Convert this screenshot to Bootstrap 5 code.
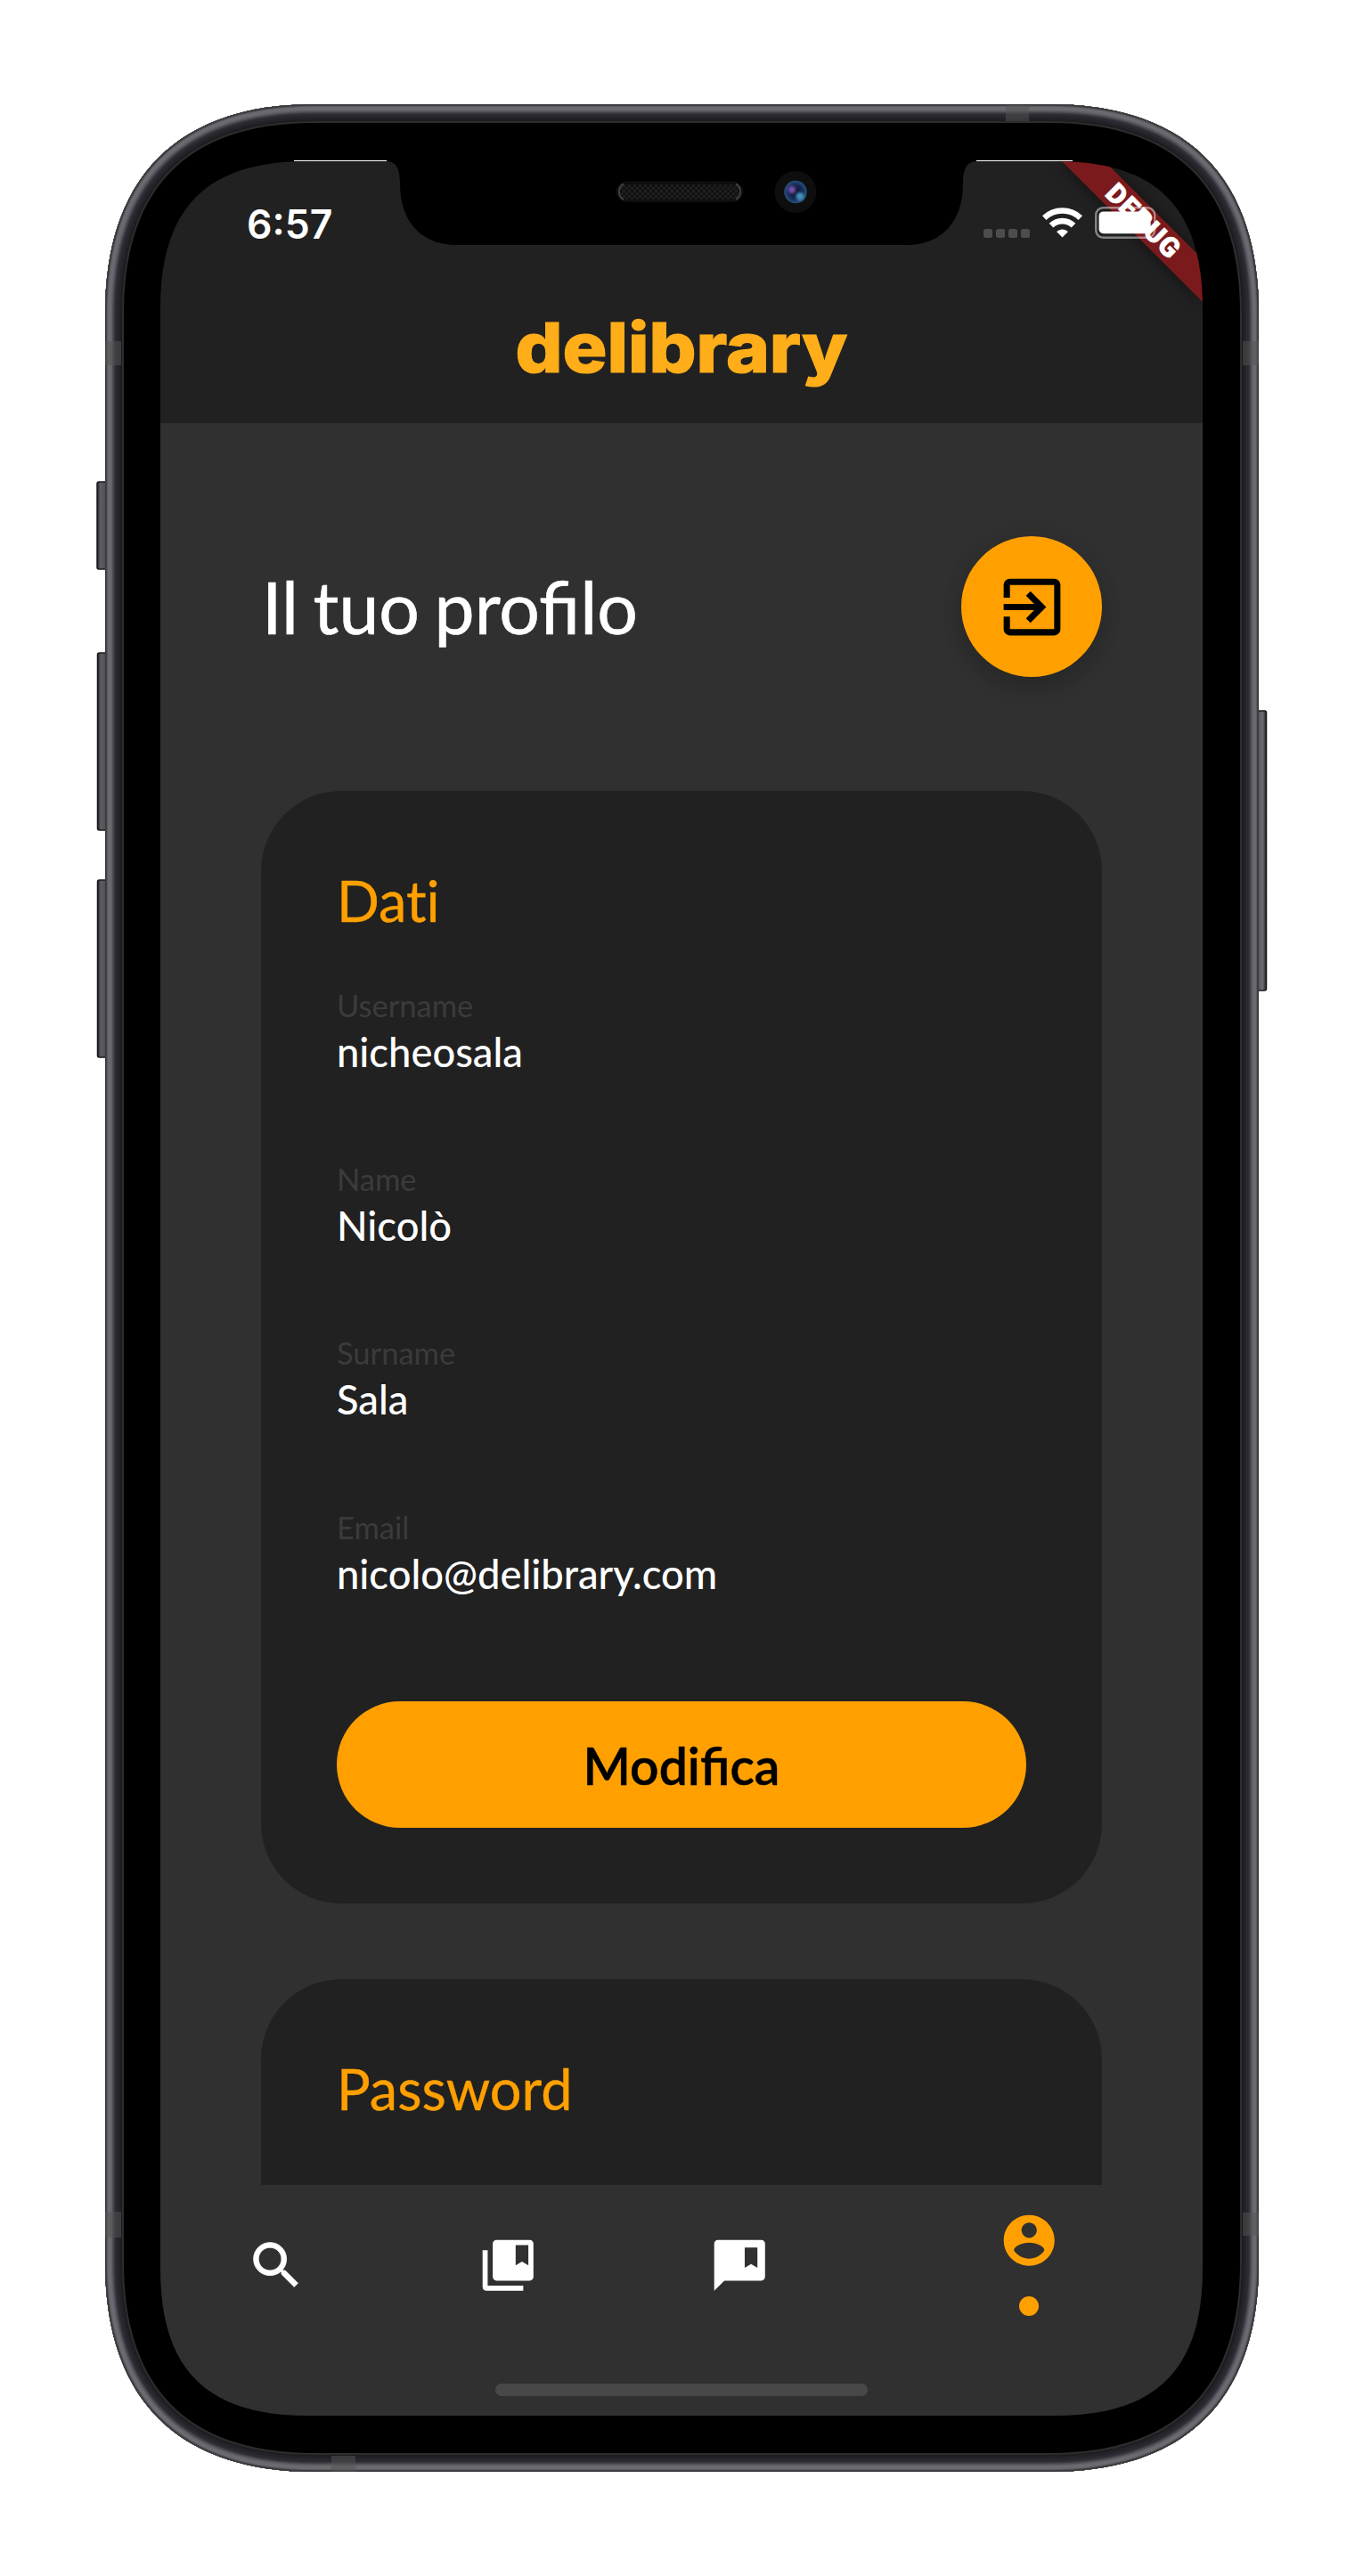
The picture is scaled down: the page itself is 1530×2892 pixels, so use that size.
<!DOCTYPE html>
<html lang="it">
<head>
<meta charset="utf-8">
<meta name="viewport" content="width=device-width, initial-scale=1">
<title>delibrary</title>
<link href="https://cdn.jsdelivr.net/npm/bootstrap@5.3.0/dist/css/bootstrap.min.css" rel="stylesheet">
<style>
body{background:#fff;font-family:Lato,"Liberation Sans",sans-serif;color:#fff}
.stage{width:1530px;height:2892px;padding:180px}
.app-screen{width:1170px;height:2532px;background:#303030}
.bezel{left:0;top:0;z-index:10;pointer-events:none}
.app-header{height:295px;background:#212121}
.status{height:144px;padding:48px 51px 0 97px;font-family:Inter,sans-serif}
.clock{font-size:44.5px;font-weight:600;line-height:54px;margin-top:-3px}
.dots{gap:4px;padding-bottom:1px;height:40px}
.dots i{width:10px;height:10px;border-radius:2.5px;background:#4d4d4d}
.battery{z-index:3}
.wifi{margin:0 14px 1px}
.brand{font-family:Inter,sans-serif;font-weight:800;font-size:77px;line-height:90px;color:#ffae19;letter-spacing:0;margin-top:21px;transform:scaleX(1.08);-webkit-text-stroke:1.2px #ffae19}
.debug{right:0;top:0;z-index:2}
.app-main{height:1977.5px;padding:127px 113px 0}
.title{font-size:80.5px;line-height:96px;font-weight:400;word-spacing:-4px;-webkit-text-stroke:.6px #fff;padding-left:1px}
.exit-btn{width:158px;height:158px;background:#ffa000;box-shadow:0 12px 22px rgba(0,0,0,.16),0 2px 30px rgba(0,0,0,.05)}
.panel{background:#212121;border-radius:90px;padding:85px}
.panel-data{margin-top:128px}
.panel-pass{margin-top:85px;min-height:700px}
.panel-title{font-size:63px;line-height:75px;color:#ffa000;font-weight:400;margin-bottom:58px;font-variant-ligatures:none;-webkit-text-stroke:.4px #ffa000}
.field{margin-bottom:92.2px}
.field dt{font-size:34.5px;line-height:45px;color:#3b3b3b;font-weight:400}
.field dd{font-size:45.3px;line-height:58px;font-weight:500;margin:0;padding-top:1px;height:58px}
.edit-btn{height:142px;background:#ffa000;color:#000;font-size:57px;line-height:1.2;font-weight:600;border:0;padding:3px 0 0;margin-top:115px;-webkit-text-stroke:.5px #000}
.app-nav{height:259.5px;background:#303030}
.nav-row{height:181px}
.tab{flex:2 1 0}
.tab.current{flex-grow:3;color:#ffa000;padding-bottom:5px}
.tab svg{width:68.5px;height:68.5px}
.pip{width:22px;height:22px;background:#ffa000;margin-top:28.5px}
.homebar{width:418px;height:14px;background:#484848;border-radius:7px;margin:42.5px auto 0}
</style>
<script src="https://cdn.jsdelivr.net/npm/bootstrap@5.3.0/dist/js/bootstrap.bundle.min.js"></script>
</head>
<body>
<div class="stage position-relative overflow-hidden">
  <div class="app-screen d-flex flex-column position-relative overflow-hidden">
    <header class="app-header">
      <div class="status d-flex justify-content-between align-items-start">
        <div class="clock">6:57</div>
        <div class="d-flex align-items-end">
          <div class="dots d-flex align-items-end"><i></i><i></i><i></i><i></i></div>
          <svg class="wifi" width="45" height="34" viewBox="0 0 45 34" fill="none" stroke="#fff">
            <path d="M2.200 11.600C13.500 .8 31.500 .8 42.800 11.600" stroke-width="6.600"/>
            <path d="M10 20.200C17 13.400 28 13.400 35 20.200" stroke-width="6.600"/>
            <path d="M22.500 33.500l-6.300-6.200c3.400-3.600 9.200-3.600 12.600 0z" fill="#fff" stroke="none"/>
          </svg>
          <svg class="battery position-relative" width="70" height="36" viewBox="0 0 70 36">
            <rect x="1.200" y="1.200" width="66" height="33.600" rx="8" fill="none" stroke="#fff" stroke-opacity=".45" stroke-width="2.400"/>
            <rect x="4.600" y="5.400" width="58" height="24.800" rx="5" fill="#fff"/>
          </svg>
        </div>
      </div>
      <div class="brand text-center">delibrary</div>
    </header>
    <svg class="debug position-absolute" width="220" height="220" viewBox="0 0 220 220">
      <defs>
        <filter id="sh" x="-20%" y="-20%" width="140%" height="140%"><feGaussianBlur stdDeviation="9"/></filter>
      </defs>
      <path d="M61 0H109L220 111V159Z" fill="#000" opacity=".5" filter="url(#sh)"/>
      <path d="M61 0H109L220 111V159Z" fill="#7b1a1c"/>
      <text transform="translate(153.500 67.500) rotate(45)" x="0" y="11" text-anchor="middle" textLength="103" font-family="Roboto, sans-serif" font-weight="900" font-size="30.600" fill="#fff" stroke="#fff" stroke-width=".8">DEBUG</text>
    </svg>
    <main class="app-main overflow-hidden">
      <div class="d-flex justify-content-between align-items-center">
        <h1 class="title mb-0">Il tuo profilo</h1>
        <button class="btn exit-btn rounded-circle p-0 border-0 d-flex align-items-center justify-content-center" aria-label="Esci">
          <svg width="85" height="85" viewBox="0 0 24 24" fill="#000"><path d="M10.09 15.59L11.5 17l5-5-5-5-1.41 1.41L12.67 11H3v2h9.67l-2.58 2.59zM19 3H5c-1.11 0-2 .9-2 2v4h2V5h14v14H5v-4H3v4c0 1.1.89 2 2 2h14c1.1 0 2-.9 2-2V5c0-1.1-.9-2-2-2z"/></svg>
        </button>
      </div>
      <section class="panel panel-data">
        <h2 class="panel-title">Dati</h2>
        <dl class="mb-0">
          <div class="field"><dt>Username</dt><dd>nicheosala</dd></div>
          <div class="field"><dt>Name</dt><dd>Nicolò</dd></div>
          <div class="field"><dt>Surname</dt><dd>Sala</dd></div>
          <div class="field mb-0"><dt>Email</dt><dd>nicolo@delibrary.com</dd></div>
        </dl>
        <button class="btn edit-btn rounded-pill w-100 d-block">Modifica</button>
      </section>
      <section class="panel panel-pass">
        <h2 class="panel-title">Password</h2>
      </section>
    </main>
    <nav class="app-nav">
      <div class="nav-row d-flex">
        <div class="tab d-flex align-items-center justify-content-center"><svg viewBox="0 0 24 24" fill="#fff" stroke="#fff" stroke-width=".25"><path d="M15.5 14h-.79l-.28-.27C15.41 12.59 16 11.11 16 9.5 16 5.91 13.09 3 9.5 3S3 5.91 3 9.5 5.91 16 9.5 16c1.61 0 3.09-.59 4.23-1.57l.27.28v.79l5 4.99L20.49 19l-4.99-5zm-6 0C7.01 14 5 11.99 5 9.5S7.01 5 9.5 5 14 7.01 14 9.5 11.99 14 9.5 14z"/></svg></div>
        <div class="tab d-flex align-items-center justify-content-center"><svg viewBox="0 0 24 24" fill="#fff"><path d="M4 6H2v14.5c0 .9.6 1.5 1.5 1.5H18v-2H4V6z"/><path d="M20.5 2h-13C6.6 2 6 2.600 6 3.500v13c0 .9.6 1.500 1.500 1.500h13c.9 0 1.500-.6 1.500-1.500v-13C22 2.600 21.400 2 20.500 2zM20 12l-2.500-1.500L15 12V4h5v8z"/></svg></div>
        <div class="tab d-flex align-items-center justify-content-center"><svg viewBox="0 0 24 24" fill="#fff"><path d="M20.500 2h-17C2.600 2 2 2.600 2 3.500V22l4-4h14.500c.9 0 1.500-.6 1.500-1.500v-13C22 2.600 21.400 2 20.500 2zM19 13l-2.500-1.500L14 13V5h5v8z"/></svg></div>
        <div class="tab current d-flex flex-column align-items-center justify-content-center"><svg viewBox="0 0 24 24" fill="currentColor"><path d="M12 2C6.480 2 2 6.480 2 12s4.480 10 10 10 10-4.480 10-10S17.520 2 12 2zm0 3c1.660 0 3 1.340 3 3s-1.340 3-3 3-3-1.340-3-3 1.340-3 3-3zm0 14.200c-2.500 0-4.710-1.280-6-3.220.03-1.990 4-3.080 6-3.080 1.990 0 5.970 1.090 6 3.080-1.290 1.940-3.500 3.220-6 3.220z"/></svg><span class="pip rounded-circle"></span></div>
      </div>
      <div class="homebar"></div>
    </nav>
  </div>

  <svg class="bezel position-absolute" width="1530" height="2892" viewBox="0 0 1530 2892">
    <defs>
      <path id="body" d="M118 352C118 198.500 199.500 117 353 117H1178C1331.500 117 1413 198.500 1413 352V2540C1413 2693.500 1331.500 2775 1178 2775H353C199.500 2775 118 2693.500 118 2540Z"/>
      <clipPath id="bodyClip"><use href="#body"/></clipPath>
      <linearGradient id="key" x1="0" x2="1"><stop offset="0" stop-color="#1c1c20"/><stop offset=".25" stop-color="#5d5d63"/><stop offset="1" stop-color="#45454b"/></linearGradient>
      <linearGradient id="keyR" x1="1" x2="0"><stop offset="0" stop-color="#1c1c20"/><stop offset=".3" stop-color="#6c6c72"/><stop offset="1" stop-color="#45454b"/></linearGradient>
      <pattern id="mesh" width="6" height="6" patternUnits="userSpaceOnUse"><rect width="6" height="6" fill="#111"/><path d="M0 0h3v3H0zM3 3h3v3H3z" fill="#1f1f1f"/></pattern>
      <radialGradient id="lens"><stop offset="0" stop-color="#0b1026"/><stop offset=".6" stop-color="#14284f"/><stop offset="1" stop-color="#27507f"/></radialGradient>
      <filter id="soft" x="-50%" y="-50%" width="200%" height="200%"><feGaussianBlur stdDeviation="1.700"/></filter>
    </defs>
    <g fill="url(#key)" stroke="#1b1b1f" stroke-width="1.500">
      <rect x="109" y="541" width="14" height="98" rx="2"/>
      <rect x="109.500" y="733" width="14" height="199" rx="2"/>
      <rect x="109.500" y="988" width="14" height="199" rx="2"/>
      <rect x="1408" y="798" width="13.500" height="314" rx="2" fill="url(#keyR)"/>
    </g>
    <path fill-rule="evenodd" d="M118 352C118 198.500 199.500 117 353 117H1178C1331.500 117 1413 198.500 1413 352V2540C1413 2693.500 1331.500 2775 1178 2775H353C199.500 2775 118 2693.500 118 2540ZM180 346C180 233 232 181 345 181H433C445 181 449 190 449 206C449 250 474 275 512 275H1018C1056 275 1081 250 1081 206C1081 190 1085 181 1097 181H1185C1298 181 1350 233 1350 346V2547C1350 2660 1298 2712 1185 2712H345C232 2712 180 2660 180 2547Z"/>
    <g clip-path="url(#bodyClip)" fill="none">
      <use href="#body" stroke="#2d2d2d" stroke-width="42"/>
      <use href="#body" stroke="#1d1d20" stroke-width="38"/>
      <use href="#body" stroke="#242329" stroke-width="34"/>
      <use href="#body" stroke="#2b2a31" stroke-width="28"/>
      <use href="#body" stroke="#3a3940" stroke-width="22"/>
      <use href="#body" stroke="#4f4e54" stroke-width="19"/>
      <use href="#body" stroke="#616066" stroke-width="16"/>
      <use href="#body" stroke="#6b6a70" stroke-width="13"/>
      <use href="#body" stroke="#5b5a5f" stroke-width="6"/>
      <use href="#body" stroke="#3a3a3d" stroke-width="3.500"/>
      <g fill="#545454" opacity=".5">
        <path d="M118 383h18v27h-18zM1395 383h18v27h-18zM1129 118h26v18h-26zM118 2483h18v29h-18zM1395 2484h18v26h-18zM372 2757h27v18h-27z"/>
      </g>
    </g>
    <path d="M330 180.500H434M1096 180.500H1204" stroke="#fff" stroke-width="1"/>
    <rect x="692.500" y="204.500" width="141" height="21.500" rx="10.700" fill="#0c0c0c" stroke="#181818"/>
    <rect x="695" y="207" width="136" height="17" rx="8.500" fill="url(#mesh)"/>
    <path d="M700 206.500a10 10 0 0 0 0 17.500M826 206.500a10 10 0 0 1 0 17.500" fill="none" stroke="#4a4a4a" stroke-width="1.500"/>
    <circle cx="893" cy="215.500" r="23.500" fill="#0e0e0e"/>
    <circle cx="893" cy="215.500" r="12.700" fill="url(#lens)"/>
    <circle cx="889" cy="213" r="4" fill="#7b50b0" filter="url(#soft)"/>
    <circle cx="898" cy="220.500" r="4.500" fill="#4391b8" filter="url(#soft)"/>
  </svg>
</div>
</body>
</html>
